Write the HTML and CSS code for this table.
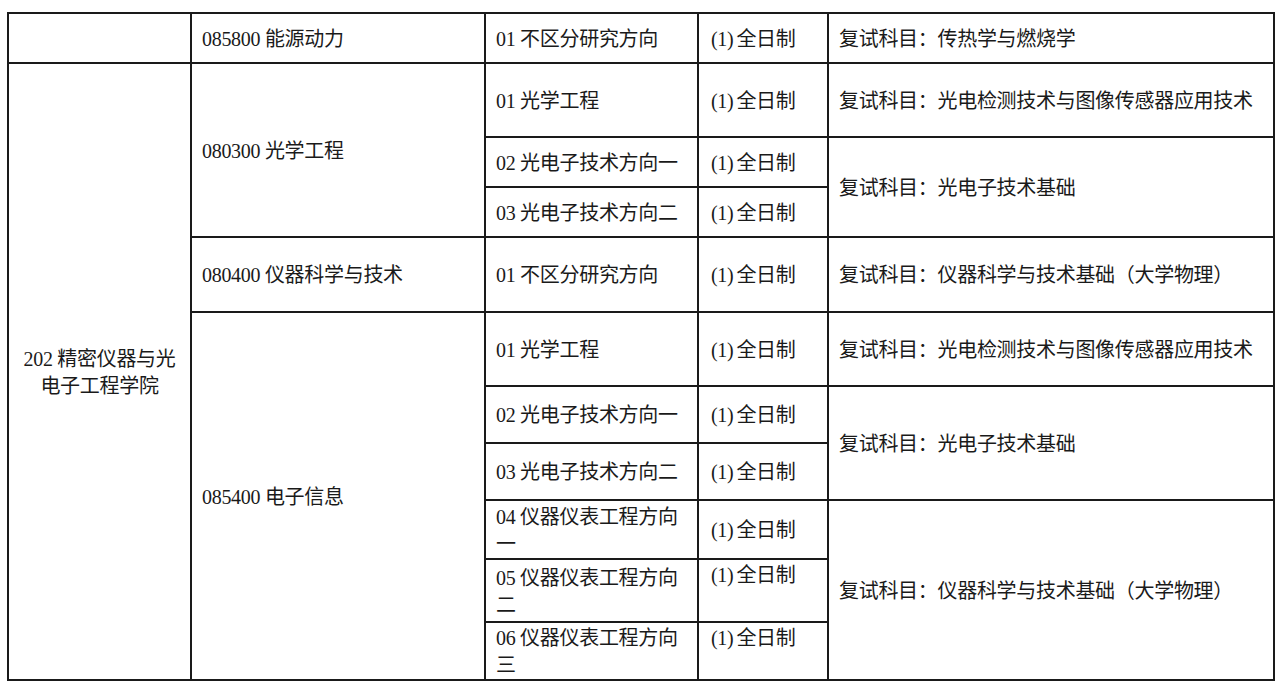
FILE: index.html
```html
<!DOCTYPE html>
<html lang="zh-CN">
<head>
<meta charset="utf-8">
<title>复试科目</title>
<link rel="stylesheet" href="styles.css">
</head>
<body>
<div class="grid">
  <div class="cell"></div>
  <div class="cell">085800 能源动力</div>
  <div class="cell">01 不区分研究方向</div>
  <div class="cell mode">(1)<span class="gap"></span>全日制</div>
  <div class="cell">复试科目：传热学与燃烧学</div>

  <div class="cell college span10">202 精密仪器与光电子工程学院</div>
  <div class="cell span3">080300 光学工程</div>
  <div class="cell">01 光学工程</div>
  <div class="cell mode">(1)<span class="gap"></span>全日制</div>
  <div class="cell">复试科目：光电检测技术与图像传感器应用技术</div>

  <div class="cell">02 光电子技术方向一</div>
  <div class="cell mode">(1)<span class="gap"></span>全日制</div>
  <div class="cell span2">复试科目：光电子技术基础</div>

  <div class="cell">03 光电子技术方向二</div>
  <div class="cell mode">(1)<span class="gap"></span>全日制</div>

  <div class="cell">080400 仪器科学与技术</div>
  <div class="cell">01 不区分研究方向</div>
  <div class="cell mode">(1)<span class="gap"></span>全日制</div>
  <div class="cell">复试科目：仪器科学与技术基础（大学物理）</div>

  <div class="cell span6">085400 电子信息</div>
  <div class="cell">01 光学工程</div>
  <div class="cell mode">(1)<span class="gap"></span>全日制</div>
  <div class="cell">复试科目：光电检测技术与图像传感器应用技术</div>

  <div class="cell">02 光电子技术方向一</div>
  <div class="cell mode">(1)<span class="gap"></span>全日制</div>
  <div class="cell span2">复试科目：光电子技术基础</div>

  <div class="cell">03 光电子技术方向二</div>
  <div class="cell mode">(1)<span class="gap"></span>全日制</div>

  <div class="cell">04 仪器仪表工程方向一</div>
  <div class="cell mode">(1)<span class="gap"></span>全日制</div>
  <div class="cell span3">复试科目：仪器科学与技术基础（大学物理）</div>

  <div class="cell">05 仪器仪表工程方向二</div>
  <div class="cell mode top">(1)<span class="gap"></span>全日制</div>

  <div class="cell">06 仪器仪表工程方向三</div>
  <div class="cell mode top">(1)<span class="gap"></span>全日制</div>
</div>
</body>
</html>
```

FILE: styles.css
```css
html, body {
  margin: 0;
  background: #fff;
}
body {
  padding: 12px 0 0 7px;
  font-family: "Liberation Serif", "Noto Sans CJK SC", serif;
  font-size: 20px;
  color: #1a1a1a;
}
.grid {
  display: grid;
  width: 1268px;
  box-sizing: border-box;
  padding: 2px;
  gap: 2px;
  background: #1a1a1a;
  grid-template-columns: 181px 292px 211px 128px 444px;
  grid-template-rows: 48px 72px 48px 48px 73px 72px 55px 55px 57px 61px 56px;
}
.cell {
  background: #fff;
  display: flex;
  align-items: center;
  padding: 2px 10px 0;
  line-height: 27px;
  letter-spacing: -0.3px;
  overflow: hidden;
}
.mode {
  padding-left: 12px;
}
.gap {
  display: inline-block;
  width: 3px;
}
.top {
  align-items: flex-start;
  padding-top: 2px;
}
.college {
  justify-content: center;
  text-align: center;
  padding: 2px 12px 0;
}
.span2 { grid-row: span 2; }
.span3 { grid-row: span 3; }
.span6 { grid-row: span 6; }
.span10 { grid-row: span 10; }
```
